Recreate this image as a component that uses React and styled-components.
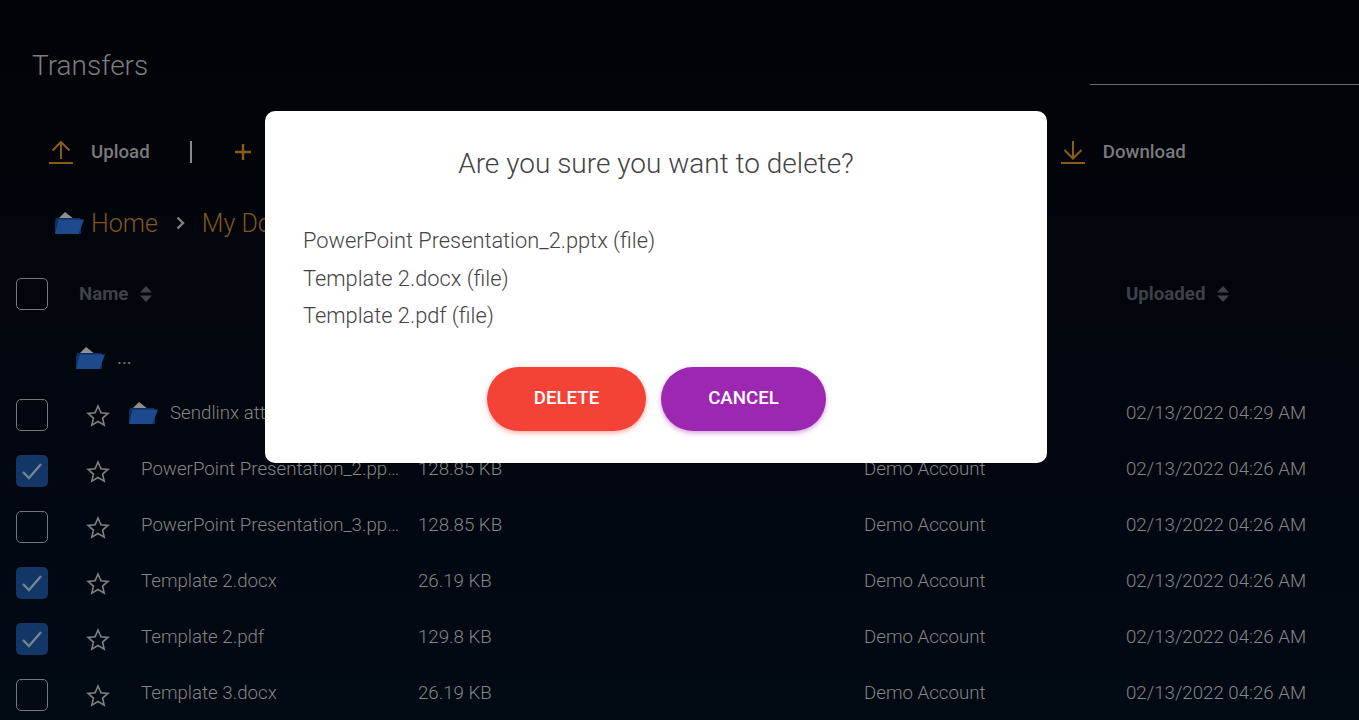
import React from "react";
import styled, { createGlobalStyle } from "styled-components";

const Global = createGlobalStyle`
  html, body { margin: 0; padding: 0; height: 100%; overflow: hidden; }
  body { font-family: Roboto, "Liberation Sans", sans-serif; background: #02040a; }
`;

const Page = styled.div`
  position: relative;
  width: 1359px;
  height: 720px;
  overflow: hidden;
  background: linear-gradient(180deg, #020308 0%, #02050c 40%, #020a14 100%);
  color: #7f7f7f;
`;

const Head = styled.header`
  display: flex;
  justify-content: space-between;
  height: 85px;
  padding-left: 32px;
`;

const Title = styled.h1`
  margin: 0;
  padding-top: 49px;
  font-size: 28px;
  line-height: 33px;
  font-weight: 300;
  color: #7d7d7d;
`;

const Search = styled.div`
  width: 269px;
  height: 84px;
  border-bottom: 1px solid #6b6b6b;
`;

const Toolbar = styled.div`
  display: flex;
  align-items: center;
  height: 28px;
  margin-top: 53px;
  padding-left: 48px;
`;

const ToolLabel = styled.span`
  font-size: 18.7px;
  font-weight: 500;
  color: #7a7a7a;
  margin-left: 17px;
`;

const Divider = styled.span`
  width: 2px;
  height: 22px;
  background: #8a8a8a;
  margin: 0 42px 0 40px;
`;

const Spacer = styled.div`
  flex: 0 0 ${(p) => p.$w}px;
`;

const Crumbs = styled.nav`
  display: flex;
  align-items: center;
  height: 30px;
  margin-top: 42px;
  padding-left: 55px;
  font-size: 25px;
  font-weight: 300;
  color: #80561f;
`;

const CrumbText = styled.span`
  margin-left: ${(p) => p.$gap || 0}px;
`;

const Row = styled.div`
  display: grid;
  grid-template-columns: 16px 32px 31px 62px 277px 446px 262px 1fr;
  align-items: center;
  height: ${(p) => p.$h || 56}px;
  font-size: 18.7px;
  font-weight: 300;
  color: #858585;
  white-space: nowrap;
`;

const HeadRow = styled(Row)`
  margin-top: 38px;
  height: 36px;
  font-weight: 700;
  color: #3d4148;
`;

const ParentRow = styled.div`
  display: flex;
  align-items: center;
  height: 56px;
  margin-top: 18px;
  padding-left: 76px;
  gap: 12px;
  font-size: 18.7px;
  color: #777;
`;

const Box = styled.span`
  grid-column: 2;
  width: 32px;
  height: 32px;
  box-sizing: border-box;
  border-radius: 5px;
  display: flex;
  align-items: center;
  justify-content: center;
  border: ${(p) => (p.$on ? "none" : "1px solid #777")};
  background: ${(p) => (p.$on ? "#123766" : "transparent")};
`;

const RowBox = styled(Box)`
  margin-top: 4px;
`;

const SortCell = styled.span`
  display: flex;
  align-items: center;
  gap: 12px;
`;

const NameHead = styled(SortCell)`
  grid-column: 3 / 6;
  padding-left: 31px;
`;

const UploadedHead = styled(SortCell)`
  grid-column: 8;
`;

const StarCell = styled.span`
  grid-column: 3 / 4;
  padding: 4px 0 0 38px;
  display: flex;
  width: 26px;
`;

const NameCell = styled.span`
  grid-column: 4 / 6;
  display: flex;
  align-items: center;
  gap: 12px;
  padding-left: ${(p) => (p.$folder ? 50 : 62)}px;
  overflow: hidden;
`;

const Clip = styled.span`
  display: block;
  width: 260px;
  overflow: hidden;
  text-overflow: ellipsis;
`;

const RowStack = styled.div`
  margin-top: -1px;
`;

const Overlay = styled.div`
  position: absolute;
  inset: 0;
  display: flex;
  align-items: flex-start;
  justify-content: center;
  padding: 111px 47px 0 0;
  box-sizing: border-box;
`;

const Modal = styled.div`
  width: 782px;
  height: 352px;
  box-sizing: border-box;
  background: #fff;
  border-radius: 10px;
  padding: 38px 38px 0;
  color: #444;
  font-weight: 300;
`;

const ModalTitle = styled.h2`
  margin: 0;
  font-size: 28px;
  line-height: 30px;
  font-weight: 300;
  text-align: center;
`;

const List = styled.ul`
  list-style: none;
  margin: 43px 0 0;
  padding: 0;
  font-size: 21.8px;
  line-height: 37.5px;
`;

const Actions = styled.div`
  display: flex;
  justify-content: center;
  gap: 15px;
  margin: 32px 0 0;
  padding-left: 1px;
`;

const Pill = styled.button`
  width: ${(p) => p.$w}px;
  height: 64px;
  border: 0;
  border-radius: 32px;
  padding: 0 0 2px;
  color: #fff;
  font: 500 18.7px Roboto, sans-serif;
  background: ${(p) => p.$bg};
  box-shadow: 0 2px 5px ${(p) => p.$shadow};
`;

const Up = () => (
  <svg width="26" height="26" viewBox="0 0 26 26" fill="none" stroke="#8a5c1c" strokeWidth="2">
    <path d="M1 24h24M13 20V3M4.500 11.500 13 3l8.500 8.500" />
  </svg>
);
const Down = () => (
  <svg width="26" height="26" viewBox="0 0 26 26" fill="none" stroke="#8a5c1c" strokeWidth="2">
    <path d="M1 24h24M13 2v17M4.500 11 13 19.500 21.500 11" />
  </svg>
);
const Plus = () => (
  <svg width="18" height="18" viewBox="0 0 18 18" fill="none" stroke="#8a5c1c" strokeWidth="2.400">
    <path d="M1 9h16M9 1v16" />
  </svg>
);
const Chevron = () => (
  <svg width="10" height="16" viewBox="0 0 10 16" fill="none" stroke="#808080" strokeWidth="2.400" style={{ margin: "0 17px 0 17px" }}>
    <path d="M2.500 2.500 8 8l-5.500 5.500" />
  </svg>
);
const Folder = () => (
  <svg width="29" height="22" viewBox="0 0 29 22" style={{ flex: "none" }}>
    <path d="M1 9 10 0l9 7z" fill="#8f8f8f" />
    <path d="M0 9l1-3h24l1 2v14H0z" fill="#0e2f5f" />
    <path d="M3.500 7.500H29L23.500 22H0z" fill="#1c4a8c" />
  </svg>
);
const Sort = () => (
  <svg width="12" height="16" viewBox="0 0 12 16" fill="currentColor" style={{ flex: "none" }}>
    <path d="M6 0l6 6.500H0zM6 16l6-6.500H0z" />
  </svg>
);
const Star = () => (
  <svg width="24" height="23" viewBox="0 0 24 23" fill="none" stroke="#808080" strokeWidth="1.600" strokeLinejoin="miter">
    <path d="M12 2l2.900 6.700 7.100.7-5.400 4.700 1.600 7.100L12 17.500l-6.200 3.700 1.600-7.100L2 9.400l7.100-.7z" />
  </svg>
);
const Check = () => (
  <svg width="22" height="18" viewBox="0 0 22 18" fill="none" stroke="#76838f" strokeWidth="2.400">
    <path d="M2 10l6 6L20 2" />
  </svg>
);

const rows = [
  { name: "Sendlinx attachments", size: "", owner: "", date: "02/13/2022 04:29 AM", folder: true },
  { name: "PowerPoint Presentation_2.pptx", size: "128.85 KB", owner: "Demo Account", date: "02/13/2022 04:26 AM", on: true },
  { name: "PowerPoint Presentation_3.pptx", size: "128.85 KB", owner: "Demo Account", date: "02/13/2022 04:26 AM" },
  { name: "Template 2.docx", size: "26.19 KB", owner: "Demo Account", date: "02/13/2022 04:26 AM", on: true },
  { name: "Template 2.pdf", size: "129.8 KB", owner: "Demo Account", date: "02/13/2022 04:26 AM", on: true },
  { name: "Template 3.docx", size: "26.19 KB", owner: "Demo Account", date: "02/13/2022 04:26 AM" },
];

export default function App() {
  return (
    <Page>
      <Global />
      <Head>
        <Title>Transfers</Title>
        <Search />
      </Head>
      <Toolbar>
        <Up />
        <ToolLabel>Upload</ToolLabel>
        <Divider />
        <Plus />
        <Spacer $w={808} />
        <Down />
        <ToolLabel>Download</ToolLabel>
      </Toolbar>
      <Crumbs>
        <Folder />
        <CrumbText $gap={7}>Home</CrumbText>
        <Chevron />
        <CrumbText>My Documents</CrumbText>
      </Crumbs>
      <HeadRow>
        <Box />
        <NameHead>Name <Sort /></NameHead>
        <UploadedHead>Uploaded <Sort /></UploadedHead>
      </HeadRow>
      <ParentRow>
        <Folder />
        <span>...</span>
      </ParentRow>
      <RowStack>
        {rows.map((r) => (
          <Row key={r.name}>
            <RowBox $on={r.on}>{r.on && <Check />}</RowBox>
            <StarCell><Star /></StarCell>
            <NameCell $folder={r.folder}>
              {r.folder && <Folder />}
              <Clip>{r.name}</Clip>
            </NameCell>
            <span>{r.size}</span>
            <span>{r.owner}</span>
            <span>{r.date}</span>
          </Row>
        ))}
      </RowStack>
      <Overlay>
        <Modal>
          <ModalTitle>Are you sure you want to delete?</ModalTitle>
          <List>
            <li>PowerPoint Presentation_2.pptx (file)</li>
            <li>Template 2.docx (file)</li>
            <li>Template 2.pdf (file)</li>
          </List>
          <Actions>
            <Pill $w={159} $bg="#f44336" $shadow="rgba(244,67,54,.45)">DELETE</Pill>
            <Pill $w={165} $bg="#9c27b0" $shadow="rgba(156,39,176,.45)">CANCEL</Pill>
          </Actions>
        </Modal>
      </Overlay>
    </Page>
  );
}
